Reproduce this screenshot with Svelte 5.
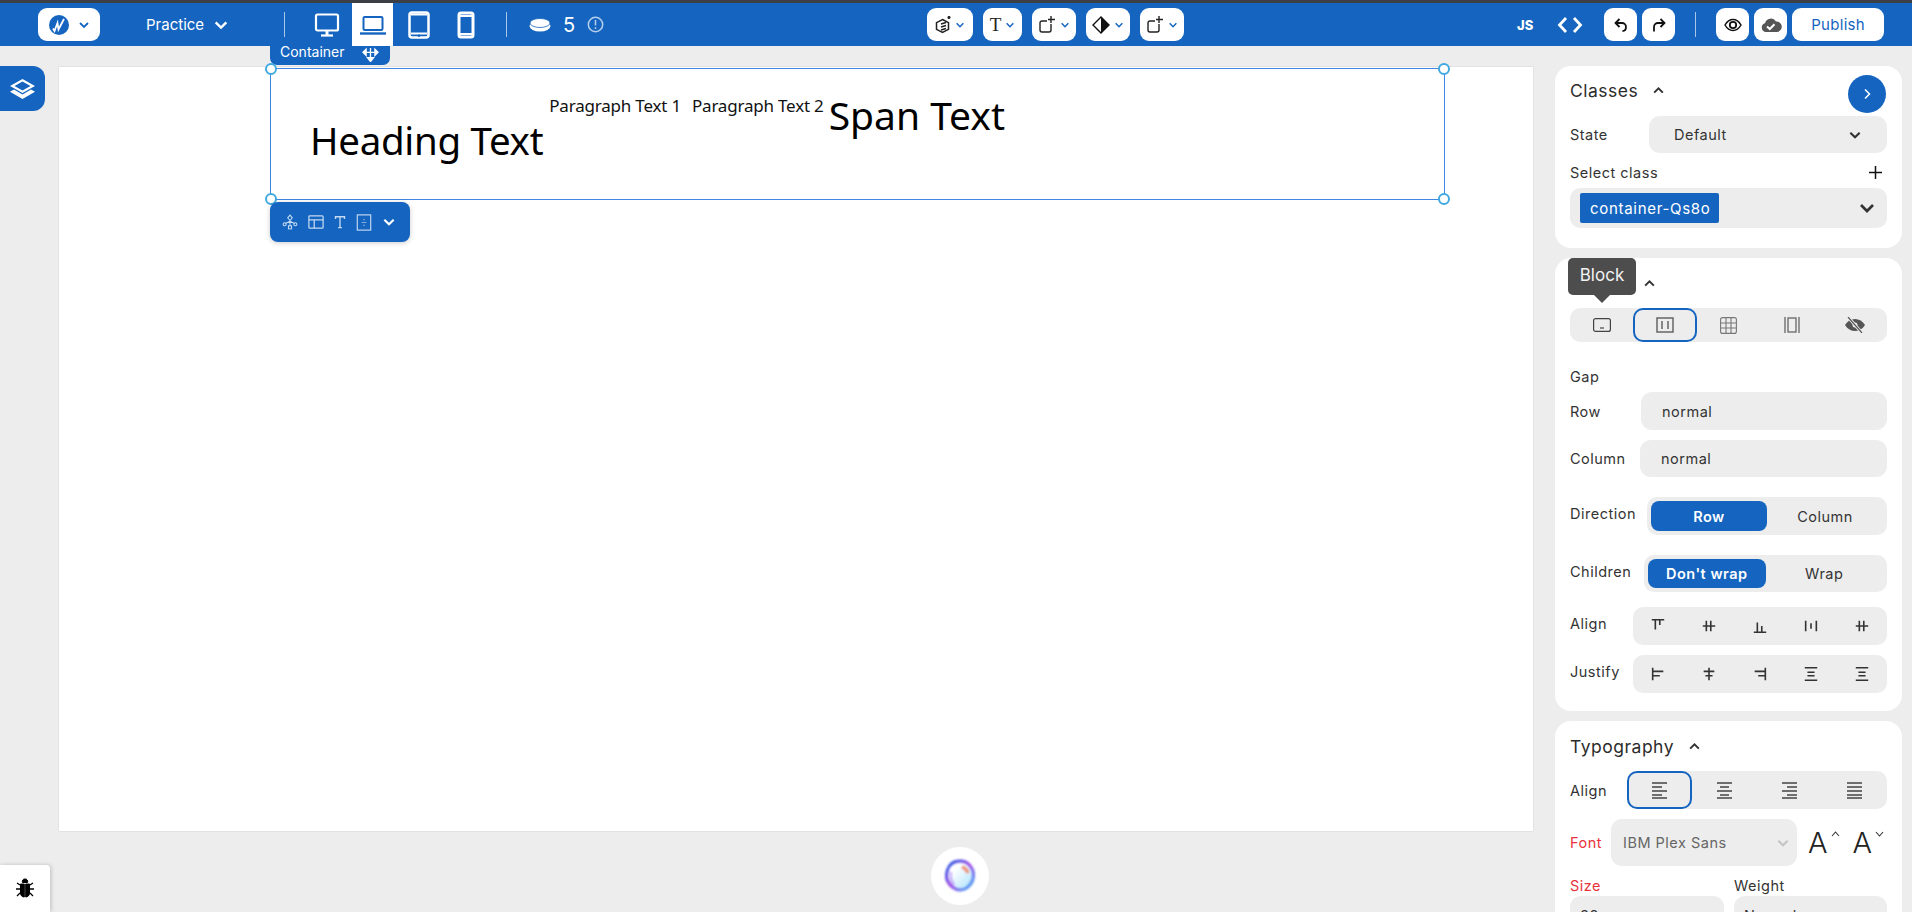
<script>
  const alignIcons = [
    'M2 2h14M6 2v11M11 2v6',
    'M2 9h14M6 3v12M11 3v12',
    'M2 16h14M6 5v11M11 9v7',
    'M3 3v12M15 3v12M9 6v6',
    'M2 9h14M6 3v12M11 3v12'
  ]
  const justifyIcons = [
    'M3 2v14M3 6h12M3 11h8',
    'M3 6h12M5 11h8M9 2v14',
    'M15 2v14M3 6h12M7 11h8',
    'M2 2h14M2 16h14M5 7h8M5 11h8',
    'M2 2h14M2 16h14M5 7h8M5 11h8'
  ]
  const textAlign = [
    'M1 2h15M1 6h10M1 10h15M1 14h10M1 17h15',
    'M1 2h15M4 6h9M1 10h15M4 14h9M1 17h15',
    'M1 2h15M6 6h10M1 10h15M6 14h10M1 17h15',
    'M1 2h15M1 6h15M1 10h15M1 14h15M1 17h15'
  ]
  const addButtons = ['shape', 'text', 'add', 'contrast', 'add']
</script>

{#snippet chev(size, color, up = false)}
  <svg class="chev" width={size} height={size} viewBox="0 0 12 12" fill="none" stroke={color} stroke-width="1.8">
    <path d={up ? 'M2 8l4-4 4 4' : 'M2 4l4 4 4-4'} />
  </svg>
{/snippet}

<div class="page">
  <header class="topbar">
    <button class="wbtn logo">
      <svg width="20" height="20" viewBox="0 0 20 20">
        <circle cx="10" cy="10" r="10" fill="#1565c0" />
        <path d="M4 13.500l1.500 2.500 3-8 1 6.500L15 4" fill="none" stroke="#fff" stroke-width="1.800" />
      </svg>
      {@render chev(12, '#1565c0')}
    </button>
    <div class="project">Practice {@render chev(16, '#fff')}</div>
    <span class="sep sep-a"></span>

    <div class="devices">
      <span class="dev">
        <svg width="26" height="26" viewBox="0 0 26 26" fill="none" stroke="#fff" stroke-width="2.200">
          <rect x="2" y="2.500" width="22" height="16" rx="1.500" />
          <path d="M13 19v4" stroke-width="3" /><path d="M7 23.500h12" />
        </svg>
      </span>
      <span class="dev active">
        <svg width="28" height="24" viewBox="0 0 28 24" fill="none" stroke="#1565c0" stroke-width="2">
          <rect x="4.500" y="4" width="19" height="13" rx="1.200" />
          <path d="M1 20.500h26" stroke-width="2.400" />
        </svg>
      </span>
      <span class="dev">
        <svg width="22" height="28" viewBox="0 0 22 28" fill="none">
          <rect x="1.500" y="1.500" width="19" height="25" rx="2.500" stroke="#fff" stroke-width="2.500" />
          <path d="M3 22.500h16M3 3.500h16" stroke="#fff" stroke-width="1.800" />
          <circle cx="11" cy="24.700" r="1.300" fill="#1565c0" />
        </svg>
      </span>
      <span class="dev">
        <svg width="18" height="28" viewBox="0 0 18 28" fill="none" stroke="#fff">
          <rect x="2" y="2" width="14" height="24" rx="2" stroke-width="3" />
          <path d="M2 5h14M2 23h14" stroke-width="2" />
        </svg>
      </span>
    </div>
    <span class="sep sep-b"></span>

    <div class="credits">
      <svg width="22" height="14" viewBox="0 0 22 14">
        <ellipse cx="11" cy="8" rx="10.500" ry="5.500" fill="#fff" />
        <ellipse cx="11" cy="5" rx="10" ry="4.500" fill="#fff" stroke="#1565c0" stroke-width="0.800" />
      </svg>
      <span class="count">5</span>
      <svg width="17" height="17" viewBox="0 0 17 17" fill="none" stroke="#b6cfec" stroke-width="1.500">
        <circle cx="8.500" cy="8.500" r="7.200" />
        <path d="M8.500 4v5.500M8.500 11.200v1.800" />
      </svg>
    </div>

    <div class="adders">
      {#each addButtons as kind}
        <button class="wbtn adder {kind}">
          {#if kind === 'shape'}
            <svg width="16" height="18" viewBox="0 0 16 18" fill="none" stroke="#222" stroke-width="1.500">
              <path d="M7.500 3.500l6 3.200v6.600l-6 3.200-6-3.200V6.700z" />
              <path d="M6 8l5-1.500M6 11l5-1.500M6 14l5-1.500" />
              <circle cx="14" cy="1.500" r="0.800" />
            </svg>
          {:else if kind === 'text'}
            <span class="t-glyph">T</span>
          {:else if kind === 'add'}
            <svg width="17" height="18" viewBox="0 0 17 18" fill="none" stroke="#222" stroke-width="1.400">
              <path d="M8 5H3a2 2 0 0 0-2 2v7a2 2 0 0 0 2 2h7a2 2 0 0 0 2-2V8" />
              <path d="M12 0v7M9 3.500h7" />
            </svg>
          {:else}
            <svg width="18" height="18" viewBox="0 0 18 18">
              <path d="M9 1l8 8-8 8-8-8z" fill="none" stroke="#111" stroke-width="1.400" />
              <path d="M9 1l8 8-8 8z" fill="#111" />
            </svg>
          {/if}
          {@render chev(10, '#1565c0')}
        </button>
      {/each}
    </div>

    <div class="actions">
      <span class="js">JS</span>
      <svg class="code" width="26" height="18" viewBox="0 0 26 18" fill="none" stroke="#fff" stroke-width="2.800">
        <path d="M9 2L2.500 9 9 16M17 2l6.500 7L17 16" />
      </svg>
      <button class="wbtn square undo">
        <svg width="14" height="14" viewBox="0 0 14 14" fill="none" stroke="#111" stroke-width="1.800">
          <path d="M5.500 1L1.500 5l4 4M1.500 5H8a4 4 0 0 1 4 4c0 2-1 4-3.500 4" />
        </svg>
      </button>
      <button class="wbtn square redo">
        <svg width="14" height="14" viewBox="0 0 14 14" fill="none" stroke="#111" stroke-width="1.800">
          <path d="M8.500 1l4 4-4 4M12.500 5H6a4 4 0 0 0-4 4v4.500" />
        </svg>
      </button>
      <span class="sep sep-c"></span>
      <button class="wbtn square eye">
        <svg width="18" height="14" viewBox="0 0 18 14" fill="none" stroke="#111" stroke-width="1.500">
          <path d="M1 7c2-3.500 4.700-5.500 8-5.500s6 2 8 5.500c-2 3.500-4.700 5.500-8 5.500S3 10.500 1 7z" />
          <circle cx="9" cy="7" r="3.200" stroke-width="1.800" />
        </svg>
      </button>
      <button class="wbtn square cloud">
        <svg width="22" height="18" viewBox="0 0 22 18">
          <path d="M6 16a4.500 4.500 0 0 1-1-8.800A6 6 0 0 1 16 5.500a4.800 4.800 0 0 1 1 10.500z" fill="#555" />
          <path d="M7 10.500l2.800 2.500 4.700-4.800" fill="none" stroke="#fff" stroke-width="2" />
        </svg>
      </button>
      <button class="wbtn publish">Publish</button>
    </div>
  </header>

  <div class="workspace">
    <div class="rail">
      <button class="layers">
        <svg width="25" height="20" viewBox="0 0 25 20" fill="#fff">
          <path d="M12.500 0L25 7l-12.500 7L0 7zM12.500 2.500L4.500 7l8 4.500 8-4.500z" fill-rule="evenodd" />
          <path d="M4 10.500l8.500 5 8.500-5 4 2.300L12.500 20 0 12.800z" />
        </svg>
      </button>
    </div>

    <main class="canvas">
      <section class="selected">
        <div class="tag-top">
          <span>Container</span>
          <svg class="move" width="19" height="15" viewBox="0 0 20 17" fill="#fff" stroke="#fff" stroke-width="1.500">
            <path d="M2 6h16M10 1v11" />
            <path d="M5 2.500L1.500 6 5 9.500zM15 2.500L18.500 6 15 9.500zM6.500 12h7L10 16.500z" />
          </svg>
        </div>
        <i class="handle tl"></i><i class="handle tr"></i><i class="handle bl"></i><i class="handle br"></i>

        <h1>Heading Text</h1>
        <p>Paragraph Text 1</p>
        <p class="p2">Paragraph Text 2</p>
        <span class="span-text">Span Text</span>

        <div class="tools">
          <svg width="16" height="16" viewBox="0 0 21 20" fill="none" stroke="#c3d9f2" stroke-width="1.400">
            <path d="M10.500 1l3 3.500-3 3.500-3-3.500zM10.500 8v7M10.500 9l-6 3M10.500 9l6 3" />
            <circle cx="3.500" cy="13" r="2" /><circle cx="17.500" cy="13" r="2" />
            <rect x="8.500" y="15" width="4" height="4" />
          </svg>
          <svg width="16" height="16" viewBox="0 0 18 18" fill="none" stroke="#c3d9f2" stroke-width="1.400">
            <rect x="1" y="2" width="16" height="14" rx="1" /><path d="M1 6.500h16M7 6.500V16" />
          </svg>
          <svg width="12" height="16" viewBox="0 0 16 18" fill="none" stroke="#c3d9f2" stroke-width="1.800">
            <path d="M2 5V2h12v3M8 2v14M5.500 16.500h5" />
          </svg>
          <svg width="16" height="17" viewBox="0 0 17 19" fill="none" stroke="#c3d9f2" stroke-width="1.300">
            <rect x="1" y="1" width="15" height="17" />
            <path d="M8.500 6v1M8.500 9v1M8.500 12v1M6 9.500h1M10 9.500h1" />
          </svg>
          {@render chev(14, '#fff')}
        </div>
      </section>
    </main>

    <aside class="sidebar">
      <section class="panel classes">
        <button class="collapse">
          <svg width="14" height="14" viewBox="0 0 14 14" fill="none" stroke="#fff" stroke-width="1.500">
            <path d="M5 2.500L9.500 7 5 11.500" />
          </svg>
        </button>
        <div class="panel-head">Classes {@render chev(13, '#333', true)}</div>
        <div class="row state">
          <span>State</span>
          <div class="field select">Default {@render chev(14, '#333')}</div>
        </div>
        <div class="row select-class">
          <span>Select class</span>
          <svg width="13" height="13" viewBox="0 0 13 13" stroke="#111" stroke-width="1.500"><path d="M0 6.500h13M6.500 0v13" /></svg>
        </div>
        <div class="class-field">
          <span class="class-tag">container-Qs8o</span>
          {@render chev(18, '#333')}
        </div>
      </section>

      <section class="panel layout">
        <div class="tooltip">Block</div>
        <div class="panel-head">Layout {@render chev(13, '#333', true)}</div>
        <div class="group display">
          <span class="cell">
            <svg width="18" height="14" viewBox="0 0 18 14" fill="none" stroke="#444" stroke-width="1.200">
              <rect x="0.600" y="0.600" width="16.800" height="12.800" rx="2" /><path d="M7 10h4" />
            </svg>
          </span>
          <span class="cell on">
            <svg width="18" height="16" viewBox="0 0 18 16" fill="none" stroke="#666" stroke-width="1.500">
              <rect x="1" y="1" width="16" height="14" /><path d="M6 4v8M12 4v8" />
            </svg>
          </span>
          <span class="cell">
            <svg width="17" height="17" viewBox="0 0 17 17" fill="none" stroke="#777" stroke-width="1.100">
              <rect x="0.600" y="0.600" width="15.800" height="15.800" rx="2" /><path d="M6 1v15M11 1v15M1 6h15M1 11h15" />
            </svg>
          </span>
          <span class="cell">
            <svg width="16" height="16" viewBox="0 0 16 16" fill="none" stroke="#666" stroke-width="1.300">
              <path d="M1 0v16M15 0v16" /><rect x="4" y="1" width="8" height="14" />
            </svg>
          </span>
          <span class="cell">
            <svg width="20" height="16" viewBox="0 0 20 16" fill="#555">
              <path d="M0 8c2.500-4 6-6 10-6s7.500 2 10 6c-2.500 4-6 6-10 6S2.500 12 0 8z" />
              <circle cx="10" cy="8" r="2.500" fill="#eee" />
              <path d="M3 0l14 16" stroke="#eee" stroke-width="3" /><path d="M3 0l14 16" stroke="#555" stroke-width="1.200" />
            </svg>
          </span>
        </div>
        <div class="gap-label">Gap</div>
        <div class="row gap-row">
          <span>Row</span>
          <div class="field input row-in">normal</div>
        </div>
        <div class="row gap-col">
          <span>Column</span>
          <div class="field input col-in">normal</div>
        </div>
        <div class="row direction">
          <span class="lbl">Direction</span>
          <div class="toggle dir-t">
            <span class="opt on">Row</span><span class="opt">Column</span>
          </div>
        </div>
        <div class="row children">
          <span class="lbl">Children</span>
          <div class="toggle child-t">
            <span class="opt on">Don't wrap</span><span class="opt">Wrap</span>
          </div>
        </div>
        <div class="row align">
          <span class="lbl">Align</span>
          <div class="group small">
            {#each alignIcons as d}
              <span class="cell">
                <svg width="16" height="16" viewBox="0 0 18 18" fill="none" stroke="#333" stroke-width="1.800"><path {d} /></svg>
              </span>
            {/each}
          </div>
        </div>
        <div class="row justify">
          <span class="lbl">Justify</span>
          <div class="group small">
            {#each justifyIcons as d}
              <span class="cell">
                <svg width="16" height="16" viewBox="0 0 18 18" fill="none" stroke="#333" stroke-width="1.800"><path {d} /></svg>
              </span>
            {/each}
          </div>
        </div>
      </section>

      <section class="panel typography">
        <div class="panel-head">Typography {@render chev(13, '#333', true)}</div>
        <div class="row t-align">
          <span>Align</span>
          <div class="group text-group">
            {#each textAlign as d, i}
              <span class="cell" class:on={i === 0}>
                <svg width="17" height="19" viewBox="0 0 17 19" fill="none" stroke="#444" stroke-width="1.300"><path {d} /></svg>
              </span>
            {/each}
          </div>
        </div>
        <div class="row font-row">
          <span class="req">Font</span>
          <div class="font-select">IBM Plex Sans {@render chev(14, '#c4c4c4')}</div>
          <span class="size-a">A<svg width="9" height="6" viewBox="0 0 9 6" fill="none" stroke="#333" stroke-width="1.100"><path d="M1 5l3.500-4L8 5" /></svg></span>
          <span class="size-a">A<svg width="9" height="6" viewBox="0 0 9 6" fill="none" stroke="#333" stroke-width="1.100"><path d="M1 1l3.500 4L8 1" /></svg></span>
        </div>
        <div class="pair">
          <div class="pair-col">
            <span class="req">Size</span>
            <div class="field small-field">32</div>
          </div>
          <div class="pair-col">
            <span>Weight</span>
            <div class="field small-field">Normal</div>
          </div>
        </div>
      </section>
    </aside>
  </div>

  <div class="bug">
    <svg width="20" height="22" viewBox="0 0 20 22" fill="#000" stroke="#000">
      <path d="M10 1a2.500 2.500 0 0 1 2.500 3.500h-5A2.500 2.500 0 0 1 10 1z" />
      <path d="M5.500 6h3.800v13c-2 0-3.800-1.500-3.800-4zM10.700 6h3.800v9c0 2.500-1.800 4-3.800 4z" />
      <path d="M5 7L2 5M15 7l3-2M5 11H1M15 11h4M5 15l-3 3M15 15l3 3" stroke-width="1.300" />
    </svg>
  </div>

  <div class="orb">
    <svg class="orb-art" width="36" height="36" viewBox="0 0 36 36" fill="none">
      <defs>
        <linearGradient id="orbg" x1="0" y1="0" x2="1" y2="1">
          <stop offset="0" stop-color="#1a5be0" />
          <stop offset="0.500" stop-color="#a044e8" />
          <stop offset="1" stop-color="#39b6f5" />
        </linearGradient>
        <linearGradient id="orbi" x1="0" y1="0" x2="1" y2="1">
          <stop offset="0.300" stop-color="#ffffff" />
          <stop offset="1" stop-color="#a5e0fb" />
        </linearGradient>
      </defs>
      <path d="M14 3.500c5-1 10 0 13 3 3 3 5 7 4.500 12-.5 5-3 9-7.500 12-4 2-9 2-13-1-4-3-7-7-6.500-13C5 11 8 5 14 3.500z" fill="url(#orbi)" stroke="url(#orbg)" stroke-width="3" />
      <path d="M20 9c3 1 5 3 6 6" stroke="#ee8a70" stroke-width="3" />
      <path d="M9 14c-1 4 0 9 3 13" stroke="#b08cf5" stroke-width="2.500" opacity="0.700" />
    </svg>
  </div>
</div>

<style>
  :global(body) {
    margin: 0;
    background: #ededed;
  }

  .page {
    position: relative;
    height: 912px;
    overflow: hidden;
    background: #ededed;
    border-top: 3px solid #3c3f43;
    box-sizing: border-box;
    font-family: Inter, "Noto Sans", sans-serif;
    color: #333;
  }

  button {
    border: 0;
    padding: 0;
    font: inherit;
    cursor: pointer;
  }

  svg {
    display: block;
    flex: none;
  }

  /* top bar */
  .topbar {
    display: flex;
    align-items: center;
    height: 43px;
    padding-left: 38px;
    background: #1565c0;
    color: #fff;
  }

  .wbtn {
    display: flex;
    align-items: center;
    justify-content: center;
    height: 33px;
    background: #fff;
    border-radius: 9px;
  }

  .logo {
    width: 62px;
    gap: 9px;
  }

  .project {
    display: flex;
    align-items: center;
    gap: 9px;
    margin-left: 46px;
    font-size: 15px;
  }

  .sep {
    width: 1px;
    height: 25px;
    background: #a9c6e8;
  }

  .sep-a { margin-left: 55px; }
  .sep-b { margin-left: 20px; }

  .devices {
    display: flex;
    margin-left: 20px;
  }

  .dev {
    display: flex;
    align-items: center;
    justify-content: center;
    width: 41px;
    height: 43px;
  }

  .dev:first-child { width: 43px; margin-right: 4px; }
  .dev.active { background: #fff; }
  .dev:nth-child(3) { width: 52px; }

  .credits {
    display: flex;
    align-items: center;
    margin-left: 22px;
    width: 74px;
  }

  .count {
    margin: 0 12px;
    font-size: 20px;
  }

  .adders {
    display: flex;
    gap: 10px;
    margin-left: 324px;
  }

  .adder {
    gap: 4px;
    width: 44px;
  }

  .adder.shape { width: 46px; }
  .adder.text { width: 39px; }
  .adder.contrast { width: 44px; }

  .t-glyph {
    font-family: "Liberation Serif", serif;
    font-size: 19px;
    color: #222;
  }

  .actions {
    display: flex;
    align-items: center;
    margin-left: 333px;
  }

  .js {
    width: 17px;
    font-size: 13px;
    font-weight: 800;
  }

  .code { margin-left: 23px; }

  .square {
    width: 33px;
  }

  .undo { margin-left: 21px; }
  .redo { margin-left: 5px; }
  .sep-c { margin: 0 20px; }
  .cloud { margin-left: 5px; }

  .publish {
    width: 92px;
    margin-left: 5px;
    color: #1565c0;
    font-size: 15px;
    letter-spacing: 0.300px;
  }

  /* workspace */
  .workspace {
    display: flex;
    align-items: flex-start;
    padding-top: 20px;
  }

  .rail {
    width: 59px;
    flex: none;
  }

  .layers {
    display: flex;
    align-items: center;
    justify-content: center;
    width: 45px;
    height: 45px;
    background: #1565c0;
    border-radius: 0 12px 12px 0;
  }

  .canvas {
    flex: none;
    box-sizing: border-box;
    width: 1474px;
    height: 764px;
    margin-top: 1px;
    padding: 1px 0 0 211px;
    background: #fff;
    box-shadow: 0 0 1px rgba(0, 0, 0, 0.25);
  }

  .selected {
    position: relative;
    display: flex;
    align-items: flex-start;
    box-sizing: border-box;
    width: 1175px;
    height: 132px;
    padding-left: 39px;
    border: 1px solid #3f87e0;
    font-family: "Noto Sans", sans-serif;
    color: #000;
  }

  h1 {
    margin: 48px 0 0;
    font-size: 38.500px;
    font-weight: 400;
    line-height: 46px;
    letter-spacing: -0.300px;
    white-space: nowrap;
  }

  .selected p {
    margin: 26px 0 0 6px;
    font-size: 17px;
    line-height: 22px;
    white-space: nowrap;
    letter-spacing: -0.200px;
    color: #111;
  }

  .selected .p2 { margin-left: 11px; }

  .span-text {
    margin: 23px 0 0 5px;
    font-size: 39px;
    line-height: 46px;
    white-space: nowrap;
  }

  .tag-top {
    position: absolute;
    left: -1px;
    top: -23px;
    display: flex;
    align-items: center;
    gap: 16px;
    box-sizing: border-box;
    width: 120px;
    height: 19px;
    padding: 0 0 9px 10px;
    background: #1565c0;
    border-radius: 0 0 7px 7px;
    color: #fff;
    font-family: Inter, sans-serif;
    font-size: 14px;
  }

  .move { margin-top: 6px; }

  .handle {
    position: absolute;
    width: 8px;
    height: 8px;
    background: #fff;
    border: 2px solid #3fa9e0;
    border-radius: 50%;
  }

  .tl { left: -6px; top: -6px; }
  .tr { right: -6px; top: -6px; }
  .bl { left: -6px; bottom: -6px; }
  .br { right: -6px; bottom: -6px; }

  .tools {
    position: absolute;
    left: -1px;
    top: 133px;
    display: flex;
    align-items: center;
    gap: 10px;
    box-sizing: border-box;
    width: 140px;
    height: 40px;
    padding-left: 12px;
    background: #1565c0;
    border-radius: 8px;
    box-shadow: 0 1px 5px rgba(0, 0, 0, 0.2);
  }

  /* right side */
  .sidebar {
    display: flex;
    flex-direction: column;
    gap: 10px;
    width: 347px;
    margin-left: 22px;
    font-size: 14.500px;
    letter-spacing: 0.500px;
  }

  .panel {
    position: relative;
    box-sizing: border-box;
    padding: 12px 15px 20px;
    background: #fff;
    border-radius: 16px;
  }

  .panel.layout { padding: 13px 15px 18px; }
  .panel.typography { padding: 13px 15px 0; height: 260px; }

  .panel-head {
    display: flex;
    align-items: center;
    gap: 14px;
    height: 24px;
    font-size: 17.500px;
    color: #2c2c2c;
  }

  .collapse {
    position: absolute;
    right: 16px;
    top: 9px;
    display: flex;
    align-items: center;
    justify-content: center;
    width: 38px;
    height: 38px;
    background: #1565c0;
    border-radius: 50%;
  }

  .row {
    display: flex;
    align-items: center;
    justify-content: space-between;
  }

  .field {
    display: flex;
    align-items: center;
    box-sizing: border-box;
    background: #ededed;
    border-radius: 11px;
  }

  .select {
    justify-content: space-between;
    width: 238px;
    height: 37px;
    padding: 0 25px;
  }

  .state { margin-top: 14px; }
  .select-class { height: 20px; margin-top: 9px; padding-right: 5px; }

  .class-field {
    display: flex;
    align-items: center;
    justify-content: space-between;
    height: 40px;
    margin-top: 6px;
    padding: 0 11px 0 10px;
    background: #ededed;
    border-radius: 10px;
  }

  .class-tag {
    display: flex;
    align-items: center;
    box-sizing: border-box;
    width: 139px;
    height: 30px;
    padding-left: 10px;
    background: #1565c0;
    border-radius: 2px;
    color: #fff;
    font-size: 15px;
    letter-spacing: 0.700px;
  }

  .tooltip {
    position: absolute;
    left: 13px;
    top: 0;
    width: 68px;
    height: 37px;
    background: #4d4d4d;
    border-radius: 5px;
    color: #f2f2f2;
    font-size: 17px;
    line-height: 35px;
    letter-spacing: 0;
    text-align: center;
    z-index: 1;
  }

  .tooltip::after {
    content: '';
    position: absolute;
    left: 26px;
    top: 37px;
    border: 8px solid transparent;
    border-top-color: #4d4d4d;
    border-bottom: 0;
  }

  .group {
    display: grid;
    grid-auto-flow: column;
    grid-auto-columns: 1fr;
    background: #ededed;
    border-radius: 10px;
  }

  .group.display {
    height: 34px;
    margin-top: 13px;
  }

  .group.small {
    width: 254px;
    height: 38px;
  }

  .group.text-group {
    width: 260px;
    height: 38px;
  }

  .cell {
    display: flex;
    align-items: center;
    justify-content: center;
    box-sizing: border-box;
    border-radius: 10px;
  }

  .cell.on { border: 2px solid #1565c0; }

  .gap-label {
    height: 20px;
    margin-top: 25px;
    line-height: 20px;
  }

  .input {
    height: 38px;
    padding-left: 21px;
  }

  .gap-row { margin-top: 5px; }
  .gap-col { margin-top: 10px; }
  .row-in { width: 246px; }
  .col-in { width: 247px; height: 37px; }

  .toggle {
    display: grid;
    grid-template-columns: 1fr 1fr;
    box-sizing: border-box;
    padding: 4px;
    background: #ededed;
    border-radius: 10px;
  }

  .opt {
    display: flex;
    align-items: center;
    justify-content: center;
    border-radius: 8px;
  }

  .opt.on {
    background: #1565c0;
    color: #fff;
    font-weight: 600;
  }

  .direction { margin-top: 20px; }
  .children { margin-top: 20px; }
  .dir-t { width: 240px; height: 38px; }
  .child-t { width: 243px; height: 37px; }
  .align { margin-top: 15px; }
  .justify { margin-top: 10px; }
  .lbl { margin-top: -5px; }

  .t-align { margin-top: 13px; }

  .font-row {
    justify-content: flex-start;
    margin-top: 10px;
    height: 47px;
  }

  .req { color: #e8323c; }

  .font-select {
    display: flex;
    align-items: center;
    justify-content: space-between;
    box-sizing: border-box;
    width: 186px;
    height: 47px;
    margin-left: 9px;
    padding: 0 7px 0 12px;
    background: #ededed;
    border-radius: 11px;
    color: #666;
  }

  .font-row .req { width: 32px; }

  .size-a {
    display: flex;
    align-items: flex-start;
    gap: 3px;
    margin-left: 11px;
    font-size: 29px;
    font-weight: 300;
    line-height: 32px;
    letter-spacing: 0;
    color: #222;
  }

  .size-a:last-child { margin-left: 13px; }
  .size-a svg { margin-top: 4px; }

  .pair {
    display: grid;
    grid-template-columns: 154px 153px;
    gap: 10px;
    margin-top: 10px;
  }

  .pair-col span {
    display: block;
    height: 20px;
    line-height: 20px;
  }

  .small-field {
    height: 38px;
    padding-left: 10px;
  }

  /* floating stuff */
  .bug {
    position: absolute;
    left: 0;
    bottom: 0;
    display: flex;
    align-items: center;
    justify-content: center;
    width: 50px;
    height: 47px;
    background: #fff;
    border-radius: 0 4px 0 0;
    box-shadow: 1px 0 4px rgba(0, 0, 0, 0.2);
  }

  .orb {
    position: absolute;
    left: 931px;
    top: 844px;
    display: flex;
    align-items: center;
    justify-content: center;
    width: 58px;
    height: 58px;
    background: #fff;
    border-radius: 50%;
  }

  .orb-art { filter: blur(1.2px); }
</style>
